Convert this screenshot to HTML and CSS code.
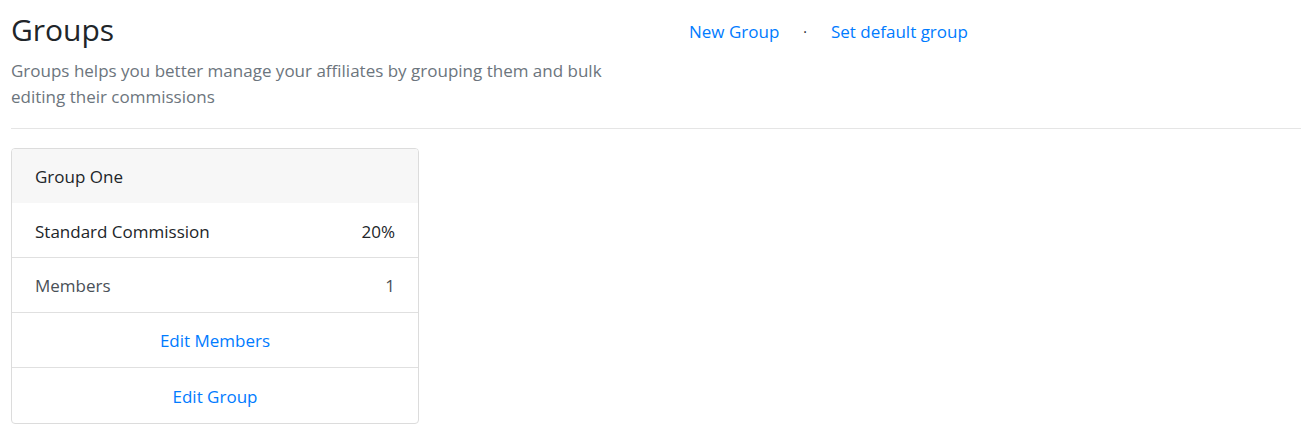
FILE: index.html
```html
<!DOCTYPE html>
<html lang="en">
<head>
<meta charset="utf-8">
<title>Groups</title>
<link rel="stylesheet" href="styles.css">
</head>
<body>
<div class="page">
  <div class="top">
    <div class="intro">
      <h2 class="title">Groups</h2>
      <p class="lead">Groups helps you better manage your affiliates by grouping them and bulk editing their commissions</p>
    </div>
    <nav class="actions">
      <a class="action" href="#">New Group</a>
      <span class="sep">·</span>
      <a class="action" href="#">Set default group</a>
    </nav>
  </div>
  <hr class="rule">
  <div class="card">
    <div class="card-header">Group One</div>
    <div class="row"><span>Standard Commission</span><span>20%</span></div>
    <div class="row muted"><span>Members</span><span>1</span></div>
    <a class="row link" href="#">Edit Members</a>
    <a class="row link last" href="#">Edit Group</a>
  </div>
</div>
</body>
</html>
```
FILE: styles.css
```css
* { box-sizing: border-box; }
html, body { margin: 0; padding: 0; background: #fff; }
body {
  font-family: "Open Sans", "Noto Sans", sans-serif;
  font-size: 17px;
  line-height: 24px;
  color: #212529;
}
.page { padding: 0 11px; }
.top { display: flex; }
.intro { width: 660px; padding-top: 12px; }
.title {
  margin: 0;
  font-size: 30px;
  font-weight: 400;
  line-height: 36px;
}
.lead {
  margin: 10px 0 0;
  width: 612px;
  color: #6c757d;
  font-size: 17px;
  line-height: 26px;
}
.actions {
  display: flex;
  align-items: center;
  padding-top: 20px;
  height: 44px;
  margin-left: 18px;
}
.action { color: #007bff; text-decoration: none; }
.sep { margin: 0 24px 0 24px; color: #212529; font-size: 14px; }
.rule {
  margin: 18px 0 19px;
  border: 0;
  border-top: 1px solid #e5e5e5;
}
.card {
  width: 408px;
  border: 1px solid #dcdcdc;
  border-radius: 4px;
  overflow: hidden;
}
.card-header {
  background: #f7f7f7;
  padding: 16px 23px 14px;
  height: 54px;
}
.row {
  display: flex;
  justify-content: space-between;
  padding: 16px 23px 14px;
  height: 55px;
  border-top: 1px solid #e0e0e0;
}
.row:nth-child(2) { border-top: 0; height: 54px; padding-top: 17px; }
.row.last { height: 56px; padding-top: 17px; }
.muted { color: #495057; }
.link { justify-content: center; color: #007bff; text-decoration: none; }
```
